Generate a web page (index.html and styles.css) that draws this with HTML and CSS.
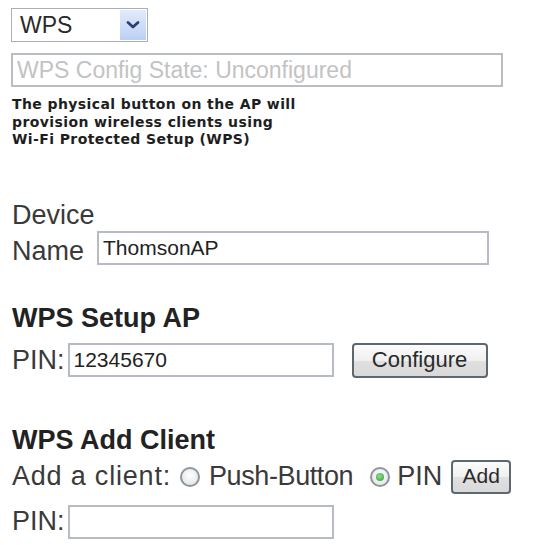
FILE: index.html
```html
<!DOCTYPE html>
<html>
<head>
<meta charset="utf-8">
<link rel="stylesheet" href="styles.css">
</head>
<body>
<div class="page">
  <div class="select">
    <span class="select-text">WPS</span>
    <span class="select-arrow">
      <svg width="14" height="10" viewBox="0 0 14 10"><path d="M2 2.5 L7 7 L12 2.5" fill="none" stroke="#2c3f73" stroke-width="2.8" stroke-linecap="round" stroke-linejoin="round"/></svg>
    </span>
  </div>
  <div class="state">WPS Config State: Unconfigured</div>
  <p class="desc">The physical button on the AP will<br>provision wireless clients using<br>Wi-Fi Protected Setup (WPS)</p>

  <div class="device">
    <div class="label-line">Device</div>
    <div class="row name-row">
      <span class="label">Name</span>
      <span class="input input-name">ThomsonAP</span>
    </div>
  </div>

  <h2 class="heading setup">WPS Setup AP</h2>
  <div class="row pin-row">
    <span class="label">PIN:</span>
    <span class="input input-pin">12345670</span>
    <span class="button btn-configure">Configure</span>
  </div>

  <h2 class="heading add">WPS Add Client</h2>
  <div class="row client-row">
    <span class="label wide">Add a client:</span>
    <span class="radio first"></span>
    <span class="label narrow">Push-Button</span>
    <span class="radio checked"><span class="dot"></span></span>
    <span class="label">PIN</span>
    <span class="button btn-add">Add</span>
  </div>
  <div class="row pin2-row">
    <span class="label">PIN:</span>
    <span class="input input-pin"></span>
  </div>
</div>
</body>
</html>
```
FILE: styles.css
```css
html, body {
  margin: 0;
  padding: 0;
  background: #ffffff;
}
.page {
  padding: 8px 0 0 11px;
  font-family: "Liberation Sans", Arial, sans-serif;
  color: #3a3a3a;
}
.select {
  box-sizing: border-box;
  width: 137px;
  height: 34px;
  border: 1px solid #a9afb8;
  display: flex;
  align-items: center;
  justify-content: space-between;
  padding: 1px;
}
.select-text {
  font-size: 23px;
  color: #2a2a2a;
  padding-left: 7px;
}
.select-arrow {
  width: 26px;
  height: 30px;
  background: linear-gradient(#e3ebfb, #bccff3);
  display: flex;
  align-items: center;
  justify-content: center;
}
.state {
  box-sizing: border-box;
  margin-top: 11px;
  width: 492px;
  height: 34px;
  border: 2px solid #b9bdc4;
  font-size: 23px;
  line-height: 30px;
  color: #c3c3c3;
  padding-left: 4px;
}
.desc {
  margin: 9px 0 0 1px;
  font-family: "DejaVu Sans", Verdana, sans-serif;
  font-weight: bold;
  font-size: 14px;
  letter-spacing: 0.4px;
  line-height: 17.5px;
  color: #1e1e1e;
}
.device {
  margin-top: 51px;
  font-size: 27px;
}
.label-line {
  line-height: 31px;
  padding-left: 1px;
  color: #3a3a3a;
}
.row {
  display: flex;
  align-items: center;
}
.name-row {
  align-items: flex-start;
}
.name-row .label {
  margin-top: 5px;
}
.label {
  font-size: 27px;
  line-height: 31px;
  padding-left: 1px;
  color: #3a3a3a;
}
.label.wide {
  letter-spacing: 0.8px;
}
.label.narrow {
  letter-spacing: -0.4px;
}
.input {
  box-sizing: border-box;
  height: 34px;
  border: 2px solid #b7bcc4;
  font-size: 21px;
  line-height: 30px;
  color: #222222;
  padding-left: 4px;
  background: #fff;
}
.input-name {
  width: 392px;
  margin-left: 13px;
}
.input-pin {
  width: 266px;
  margin-left: 3px;
}
.heading {
  margin: 0;
  font-size: 27px;
  font-weight: bold;
  line-height: 32px;
  color: #222222;
  padding-left: 1px;
}
.heading.setup {
  margin-top: 35px;
}
.pin-row {
  margin-top: 9px;
}
.button {
  box-sizing: border-box;
  border: 2px solid #5e6670;
  border-radius: 4px;
  background: linear-gradient(#fbfbfb 0%, #f0f0f0 50%, #e0e0e0 51%, #d9d9d9 100%);
  font-size: 22px;
  color: #2a2a2a;
  display: flex;
  align-items: center;
  justify-content: center;
}
.btn-configure {
  width: 136px;
  height: 35px;
  margin-left: 18px;
}
.heading.add {
  margin-top: 46px;
}
.client-row {
  margin-top: 4px;
}
.radio {
  box-sizing: border-box;
  width: 20px;
  height: 20px;
  border-radius: 50%;
  border: 2px solid #8f959d;
  background: radial-gradient(circle at 50% 40%, #ffffff, #dcdfe3);
  margin: 0 6px 0 17px;
  display: flex;
  align-items: center;
  justify-content: center;
}
.radio.first {
  margin-left: 9px;
  margin-right: 8px;
}
.dot {
  width: 8px;
  height: 8px;
  border-radius: 50%;
  background: radial-gradient(circle at 45% 40%, #8fe08f, #2e9a2e);
}
.btn-add {
  width: 60px;
  height: 34px;
  margin-left: 9px;
  font-size: 21px;
  align-items: flex-start;
  padding-top: 2px;
}
.pin2-row {
  margin-top: 11px;
}
```
